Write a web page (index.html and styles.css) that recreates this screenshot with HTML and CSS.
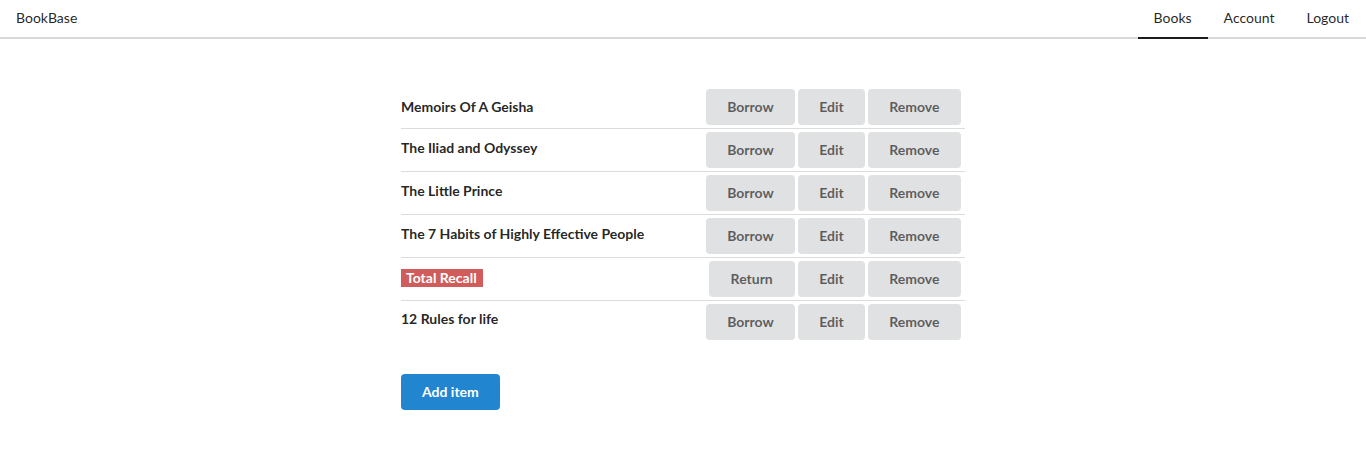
FILE: index.html
```html
<!DOCTYPE html>
<html lang="en">
<head>
<meta charset="utf-8">
<title>BookBase</title>
<link rel="stylesheet" href="styles.css">
</head>
<body>
<nav class="menu">
  <div class="menu-item brand">BookBase</div>
  <div class="menu-right">
    <a class="menu-item active">Books</a>
    <a class="menu-item">Account</a>
    <a class="menu-item">Logout</a>
  </div>
</nav>
<main class="container">
  <div class="list">
    <div class="item first">
      <div class="title">Memoirs Of A Geisha</div>
      <div class="actions"><button class="btn">Borrow</button><button class="btn">Edit</button><button class="btn">Remove</button></div>
    </div>
    <div class="item">
      <div class="title">The Iliad and Odyssey</div>
      <div class="actions"><button class="btn">Borrow</button><button class="btn">Edit</button><button class="btn">Remove</button></div>
    </div>
    <div class="item">
      <div class="title">The Little Prince</div>
      <div class="actions"><button class="btn">Borrow</button><button class="btn">Edit</button><button class="btn">Remove</button></div>
    </div>
    <div class="item">
      <div class="title">The 7 Habits of Highly Effective People</div>
      <div class="actions"><button class="btn">Borrow</button><button class="btn">Edit</button><button class="btn">Remove</button></div>
    </div>
    <div class="item">
      <div class="title labelled"><span class="label">Total Recall</span></div>
      <div class="actions"><button class="btn wide">Return</button><button class="btn">Edit</button><button class="btn">Remove</button></div>
    </div>
    <div class="item last">
      <div class="title">12 Rules for life</div>
      <div class="actions"><button class="btn">Borrow</button><button class="btn">Edit</button><button class="btn">Remove</button></div>
    </div>
  </div>
  <button class="btn primary">Add item</button>
</main>
</body>
</html>
```
FILE: styles.css
```css
* { box-sizing: border-box; }
html, body {
  margin: 0;
  padding: 0;
  background: #fff;
  font-family: Lato, "Helvetica Neue", Arial, sans-serif;
  font-size: 14px;
  color: rgba(0,0,0,.87);
}
.menu {
  display: flex;
  justify-content: space-between;
  height: 39px;
  border-bottom: 2px solid #d9d9da;
}
.menu-right { display: flex; padding-right: 1px; }
.menu-item {
  display: flex;
  align-items: center;
  height: 39px;
  padding: 0 16px 2px;
  margin-bottom: -2px;
  border-bottom: 2px solid transparent;
  line-height: 14px;
  color: rgba(0,0,0,.87);
  text-decoration: none;
  cursor: pointer;
}
.menu-item.active { border-bottom-color: #1b1c1d; }
.container {
  width: 564px;
  margin: 50px auto 0;
}
.item {
  display: flex;
  justify-content: space-between;
  align-items: flex-start;
  padding: 3px 0;
  border-top: 1px solid #dcdcdd;
}
.item.first { border-top: none; padding-top: 0; }
.title {
  font-weight: 700;
  line-height: 20px;
  padding-top: 6px;
}
.item.first .title { padding-top: 8px; }
.item.last .title { padding-top: 5px; }
.title.labelled { padding-top: 8px; line-height: 18px; }
.label {
  display: inline-block;
  background: #d05c5c;
  color: #fff;
  font-weight: 700;
  line-height: 14px;
  padding: 2px 6px 2px 5px;
}
.actions { display: flex; padding-right: 1px; }
.btn {
  font-family: Lato, "Helvetica Neue", Arial, sans-serif;
  font-size: 14px;
  font-weight: 700;
  line-height: 14px;
  height: 36px;
  padding: 11px 21px;
  margin: 0 3.5px 0 0;
  border: none;
  border-radius: 4px;
  background: #e0e1e2;
  color: rgba(0,0,0,.6);
  cursor: pointer;
}
.btn.wide { padding: 11px 22px; }
.btn.primary {
  margin-top: 31px;
  background: #2185d0;
  color: #fff;
}
```
